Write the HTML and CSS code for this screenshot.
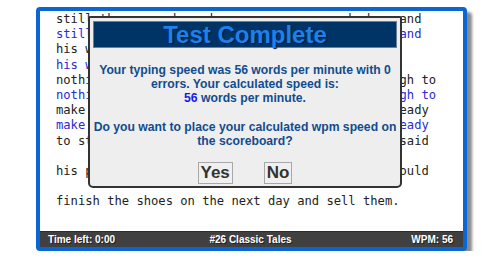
FILE: index.html
```html
<!DOCTYPE html>
<html lang="en">
<head>
    <meta charset="UTF-8">
    <title>Typing Test</title>
    <link rel="stylesheet" href="styles.css">
</head>
<body>
    <div class="board">
        <div class="text-area">
            <div class="line">still the poor shoemaker grew poorer each day, and</div>
            <div class="line typed">still the poor shoemaker grew poorer each day, and</div>
            <div class="line">his wife had to go without bread, and there was</div>
            <div class="line typed">his wife had to go without bread, and there was</div>
            <div class="line">nothing left in the whole shop but leather enough to</div>
            <div class="line typed">nothing left in the whole shop but leather enough to</div>
            <div class="line">make one pair of shoes. He cut these out, all ready</div>
            <div class="line typed">make one pair of shoes. He cut these out, all ready</div>
            <div class="line">to stitch in the morning, then he lay down and said</div>
            <div class="line typed"></div>
            <div class="line">his prayers, and hoped that by the morning he would</div>
            <div class="line typed"></div>
            <div class="line">finish the shoes on the next day and sell them.</div>
        </div>

        <div class="status-bar">
            <span class="time">Time left: 0:00</span>
            <span class="title">#26 Classic Tales</span>
            <span class="wpm">WPM: 56</span>
        </div>

        <!-- result dialog -->
        <div class="result-modal">
            <div class="result-header">Test Complete</div>
            <div class="result-message">
                Your typing speed was 56 words per minute with 0<br>
                errors. Your calculated speed is:<br>
                <span class="speed">56</span> words per minute.
            </div>
            <div class="result-message">
                Do you want to place your calculated wpm speed on<br>
                the scoreboard?
            </div>
            <div class="result-buttons">
                <button class="answer-btn">Yes</button>
                <button class="answer-btn">No</button>
            </div>
        </div>
    </div>
</body>
</html>
```

FILE: styles.css
```css
body {
    margin: 0;
    background-color: #ffffff;
    font-family: "Liberation Sans", Arial, sans-serif;
}
.board {
    position: relative;
    margin: 7px 0 0 36px;
    width: 423px;
    border: 4px solid #0a66d2;
    border-radius: 4px;
    background-color: white;
    box-shadow: 5px 5px 3px #8a8a8a;
}
.text-area {
    height: 220px;
    padding: 1px 0 0 16px;
    box-sizing: border-box;
    font-family: "DejaVu Sans Mono", monospace;
    font-size: 12.15px;
    line-height: 15.2px;
    color: #222222;
}
.line {
    height: 15.2px;
    white-space: pre;
}
.typed {
    color: #2a2ad6;
}
.status-bar {
    display: grid;
    grid-template-columns: 1fr auto 1fr;
    align-items: center;
    height: 15px;
    padding: 0 10px 0 8px;
    background-color: #404040;
    border-top: 1px solid #2c2c2c;
    color: white;
    font-size: 10px;
    font-weight: bold;
    text-shadow: 1px 1px 0 #222;
}
.status-bar .wpm {
    text-align: right;
}
.result-modal {
    position: absolute;
    top: 5px;
    left: 48px;
    width: 304px;
    height: 162px;
    padding: 3px;
    border: 2px solid #333333;
    border-radius: 2px 2px 5px 5px;
    background-color: #eeeeee;
}
.result-header {
    height: 25px;
    border: 1px solid #6b7f99;
    background-color: #003366;
    color: #1f80ea;
    font-size: 24px;
    font-weight: bold;
    line-height: 25px;
    text-align: center;
    text-shadow: 1px 1px 1px #001a3a;
}
.result-message {
    margin-top: 15px;
    color: #124c8e;
    font-size: 12.2px;
    font-weight: bold;
    line-height: 14px;
    text-align: center;
    white-space: nowrap;
}
.speed {
    color: #1a1ae6;
}
.result-buttons {
    display: flex;
    justify-content: center;
    gap: 31px;
    margin-top: 14px;
}
.answer-btn {
    height: 22px;
    padding: 0 2px;
    border: 1px solid #a8a8a8;
    background-color: #f0f0f0;
    color: #333333;
    font-family: "Liberation Sans", Arial, sans-serif;
    font-size: 17px;
    font-weight: bold;
    line-height: 20px;
}
```
